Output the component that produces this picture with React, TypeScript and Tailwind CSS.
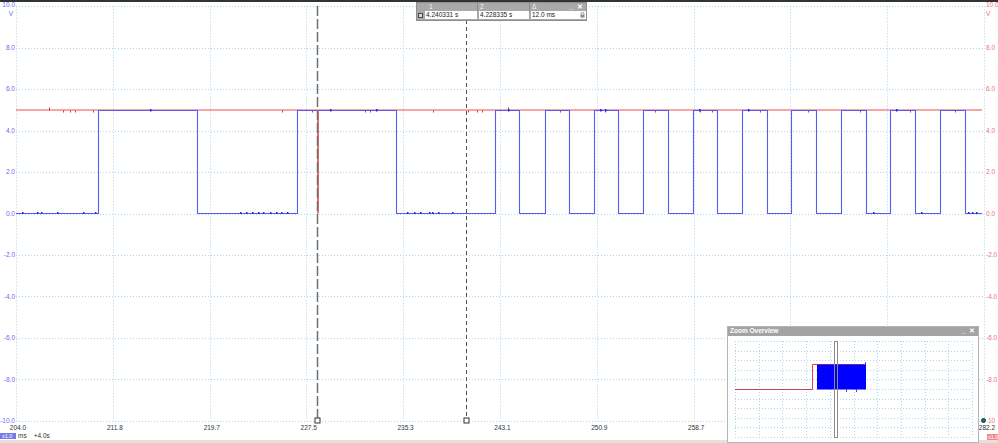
import React from "react";

const Y_LABELS = ["10.0", "8.0", "6.0", "4.0", "2.0", "0.0", "-2.0", "-4.0", "-6.0", "-8.0", "-10.0"];
const R_LABELS = ["10.0", "8.0", "6.0", "4.0", "2.0", "0.0", "-2.0", "-4.0", "-6.0", "-8.0", "10"];
const X_LABELS = ["204.0", "211.8", "219.7", "227.5", "235.3", "243.1", "250.9", "258.7", "266.5", "274.4", "282.2"];

// plot geometry (page coords)
const X0 = 16;
const X1 = 984;
const YT = 6.3;
const YB = 420.8;
const HI = 110.5;
const LO = 213.5;

// blue channel edges (rise, fall, rise ...)
const EDGES = [98, 197, 297, 396, 495, 519, 545, 569, 594, 618, 643, 668, 693, 717, 742, 767, 791, 816, 841, 866, 890, 915, 940, 965];

const BLUE_LOW_DOTS = [22, 37, 41, 57, 83, 95, 240, 246, 252, 258, 263, 270, 276, 281, 287, 407, 414, 420, 429, 432, 438, 452, 873, 921, 968, 972, 976];
const BLUE_HIGH_DOTS = [150, 330, 376, 508, 600, 605, 699, 748, 896];
const RED_UP = [49, 508];
const RED_DOWN = [63, 70, 75, 93, 282, 312, 365, 370, 433, 468, 477, 482, 560, 605, 655, 700, 712, 760, 808, 860, 910, 955];

function tracePath() {
  let d = `M${X0} ${LO}`;
  let up = false;
  for (const e of EDGES) {
    up = !up;
    d += ` H${e + 0.5} V${up ? HI : LO}`;
  }
  return d + " H982";
}

const snap = (v: number) => Math.round(v) + 0.5;

function MainPlot() {
  const vx = Array.from({ length: 11 }, (_, i) => snap(X0 + (i * (X1 - X0)) / 10));
  const hy = Array.from({ length: 11 }, (_, i) => snap(YT + (i * (YB - YT)) / 10));
  return (
    <svg width={968} height={422} viewBox="16 2 968 422" className="shrink-0 overflow-visible">
      {vx.map((x) => (
        <line key={"v" + x} x1={x} x2={x} y1={YT} y2={YB} stroke="#a9d8ee" strokeWidth={1} strokeDasharray="1 2" />
      ))}
      {hy.map((y) => (
        <line key={"h" + y} x1={X0} x2={X1} y1={y} y2={y} stroke="#a9d8ee" strokeWidth={1} strokeDasharray="1 2" />
      ))}

      {/* channel B (red) */}
      <line x1={X0} x2={982} y1={HI - 0.5} y2={HI - 0.5} stroke="#f28a8a" strokeWidth={1.6} />
      {RED_UP.map((x) => (
        <rect key={"ru" + x} x={x} y={HI - 3} width={1} height={3} fill="#e03030" />
      ))}
      {RED_DOWN.map((x) => (
        <rect key={"rd" + x} x={x} y={HI} width={1} height={2} fill="#e03030" />
      ))}

      {/* channel A (blue) */}
      <path d={tracePath()} fill="none" stroke="#5a5af4" strokeWidth={1.1} />
      {BLUE_LOW_DOTS.map((x) => (
        <rect key={"bl" + x} x={x} y={LO - 1.5} width={1.5} height={2} fill="#2828d8" />
      ))}
      {BLUE_HIGH_DOTS.map((x) => (
        <rect key={"bh" + x} x={x} y={HI - 1.5} width={1.5} height={2.5} fill="#2828d8" />
      ))}

      <rect x={317} y={HI} width={2} height={LO - HI} fill="#e85050" opacity={0.85} />

      {/* cursors */}
      <line x1={317.5} x2={317.5} y1={6} y2={418} stroke="#6f6f6f" strokeWidth={1.5} strokeDasharray="10 3" />
      <line x1={466.5} x2={466.5} y1={6} y2={418} stroke="#4f4f4f" strokeWidth={1} strokeDasharray="4 3" />
      <rect x={315} y={418} width={5} height={5} fill="#fff" stroke="#333" strokeWidth={1} />
      <rect x={464} y={418} width={5} height={5} fill="#fff" stroke="#333" strokeWidth={1} />
    </svg>
  );
}

function OverviewPlot() {
  const vx = Array.from({ length: 11 }, (_, i) => snap(735 + (i * 237) / 10));
  const hy = Array.from({ length: 11 }, (_, i) => snap(341 + (i * 96) / 10));
  return (
    <svg width={250} height={106} viewBox="728 336 250 106" className="block">
      {vx.map((x) => (
        <line key={"ov" + x} x1={x} x2={x} y1={341} y2={437.5} stroke="#a9d8ee" strokeDasharray="1 2" />
      ))}
      {hy.map((y) => (
        <line key={"oh" + y} x1={735} x2={972} y1={y} y2={y} stroke="#a9d8ee" strokeDasharray="1 2" />
      ))}
      <path d="M735 389.5 H812.5 V364.5 H866" fill="none" stroke="#e84040" strokeWidth={1} />
      <path d="M735 389.5 H812" fill="none" stroke="#5050c0" strokeWidth={1} strokeDasharray="1 3" />
      <rect x={817} y={364.5} width={49} height={25} fill="#0000ff" />
      <rect x={846} y={389} width={1} height={3} fill="#4040ff" />
      <rect x={856} y={389} width={1} height={3} fill="#4040ff" />
      <rect x={865} y={362} width={1} height={3} fill="#4040ff" />
      <rect x={834.5} y={341.5} width={3} height={96} fill="none" stroke="#8c8c8c" strokeWidth={1} />
    </svg>
  );
}

function Lock() {
  return (
    <svg width={5} height={6} viewBox="0 0 5 6">
      <path d="M1.2 2.6 V1.6 a1.3 1.3 0 0 1 2.6 0 V2.6" fill="none" stroke="#777" strokeWidth={0.8} />
      <rect x={0.5} y={2.6} width={4} height={3} fill="#888" />
    </svg>
  );
}

export default function App() {
  return (
    <div className="relative w-[998px] h-[443px] overflow-hidden bg-white flex flex-col font-['Liberation_Sans',Arial,sans-serif]">
      <div className="h-[2px] bg-[#333333] shrink-0" />

      <div className="flex h-[422px] shrink-0">
        <div className="w-[16px] shrink-0 flex flex-col justify-between items-end pr-[1px] text-[6.5px] leading-[7px] text-[#6a6af0]">
          {Y_LABELS.map((l, i) => (
            <div key={l} className={i === 0 ? "relative h-[7px] -translate-y-[1px]" : "relative h-[7px] whitespace-nowrap"}>
              {l}
              {i === 0 && (
                <>
                  <span className="absolute top-[9px] right-[2px]">V</span>
                  <span className="absolute top-[2px] -left-[4px] w-[2px] h-[3px] bg-[#2a2aa0]" />
                </>
              )}
            </div>
          ))}
        </div>

        <MainPlot />

        <div className="w-[14px] shrink-0 flex flex-col justify-between items-start pl-[2px] text-[6.5px] leading-[7px] text-[#f0707e]">
          {R_LABELS.map((l, i) => (
            <div key={i} className={i === 0 ? "relative h-[7px] -translate-y-[1px]" : "relative h-[7px] whitespace-nowrap"}>
              {i === 10 && (
                <span className="absolute -left-[5px] top-[1px] w-[5px] h-[5px] rounded-full bg-[#1f6e6e] border border-[#0d4040]" />
              )}
              {i === 10 ? <span className="pl-[2px]">{l}</span> : l}
              {i === 0 && <span className="absolute top-[9px] left-0">V</span>}
            </div>
          ))}
        </div>
      </div>

      <div className="h-[7px] w-[1002px] pl-[3px] flex justify-between shrink-0 text-[6.5px] leading-[7px] text-[#333]">
        {X_LABELS.map((l) => (
          <div key={l} className="w-[30px] text-center">
            {l}
          </div>
        ))}
      </div>

      <div className="h-[9px] flex items-center shrink-0 text-[6.5px] leading-[7px] text-[#333]">
        <div className="w-[16px] h-[6px] bg-[#7878ee] text-white text-[5.5px] leading-[6px] pl-[2px]">x1.0</div>
        <span className="ml-[2px]">ms</span>
        <span className="ml-[7px]">+4.0s</span>
        <div className="ml-auto w-[11px] h-[6px] mt-[3px] bg-[#f08a8a] text-white text-[5.5px] leading-[6px] pl-[1px] overflow-hidden whitespace-nowrap">
          x1.0
        </div>
      </div>

      <div className="h-[3px] bg-[#e7e0d6] shrink-0" />

      {/* cursor measurement box */}
      <div className="absolute left-[416px] top-[2px] w-[171px] h-[19px] bg-[#a9a9a9] border border-[#8e8e8e] flex flex-col text-[6.5px] leading-none">
        <div className="h-[8px] flex text-[#f4f4f4]">
          <div className="w-[61px] pl-[12px] border-r border-[#8a8a8a] flex items-center">1</div>
          <div className="w-[52px] pl-[2px] border-r border-[#8a8a8a] flex items-center">2</div>
          <div className="flex-1 pl-[2px] pr-[3px] flex items-center justify-between">
            <span>Δ</span>
            <span className="flex gap-[4px] font-bold text-white">
              <span>_</span>
              <span>✕</span>
            </span>
          </div>
        </div>
        <div className="h-[9px] flex gap-[2px] pb-[1px] text-[#222]">
          <div className="w-[6px] flex items-center justify-center">
            <div className="w-[5px] h-[5px] bg-[#4a4a4a] p-[1px]">
              <div className="w-full h-full bg-[#d8d8d8]" />
            </div>
          </div>
          <div className="w-[52px] bg-white pl-[1px] flex items-center">4.240331 s</div>
          <div className="w-[50px] bg-white pl-[1px] flex items-center">4.228335 s</div>
          <div className="flex-1 bg-white pl-[1px] pr-[1px] flex items-center justify-between">
            <span>12.0 ms</span>
            <Lock />
          </div>
        </div>
      </div>

      {/* zoom overview window */}
      <div className="absolute left-[727px] top-[326px] w-[252px] h-[117px] border border-[#b4b4b4] bg-white flex flex-col">
        <div className="h-[9px] bg-[#a3a3a3] flex items-center justify-between px-[2px] text-white font-bold text-[6.5px] leading-none">
          <span>Zoom Overview</span>
          <span className="flex gap-[4px] pr-[1px]">
            <span>_</span>
            <span>✕</span>
          </span>
        </div>
        <OverviewPlot />
      </div>
    </div>
  );
}
